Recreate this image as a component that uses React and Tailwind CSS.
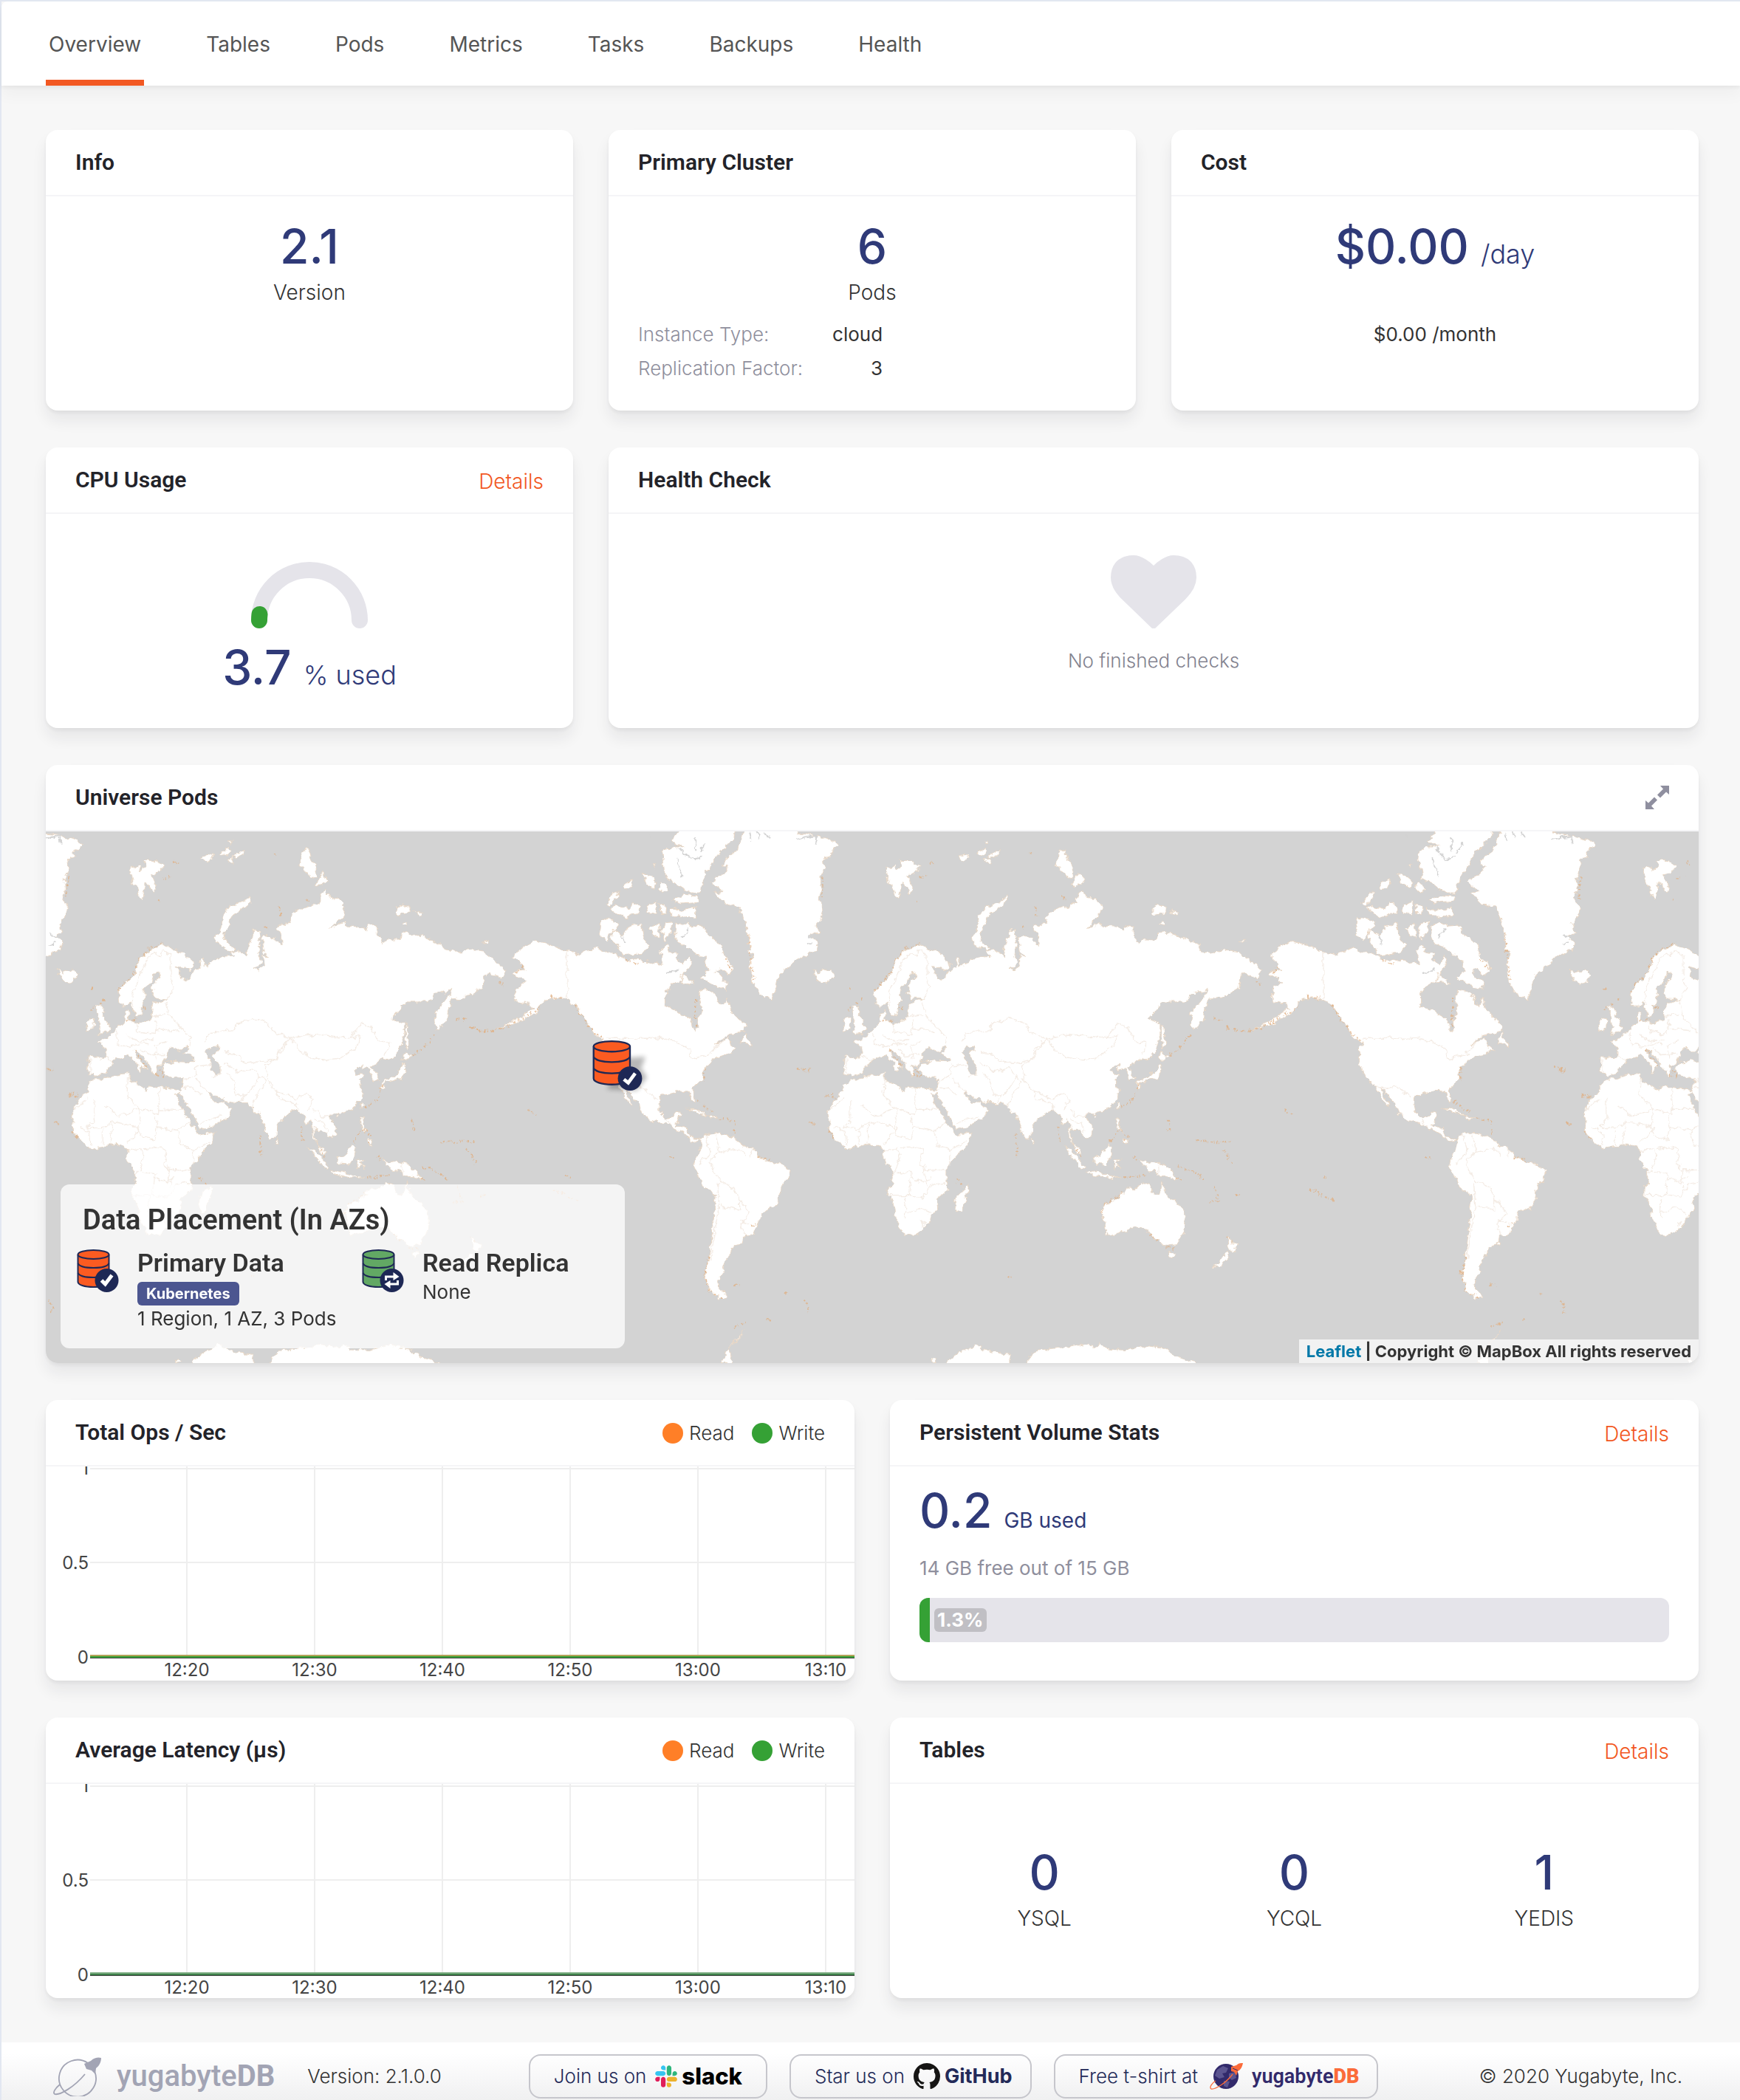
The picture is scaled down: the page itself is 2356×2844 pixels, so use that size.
import React from "react";

const TITLE = "font-['Roboto']";

/* ---------- shared pieces ---------- */

function Card({ title, action, className = "", children }) {
  return (
    <section
      className={`flex min-w-0 flex-col overflow-hidden rounded-2xl bg-white shadow-[0_3px_4px_rgba(35,35,41,0.05),0_14px_20px_rgba(35,35,41,0.07)] ${className}`}
    >
      <header className="flex h-[90px] shrink-0 items-center justify-between border-b-2 border-[#f5f5f7] px-10">
        <h2 className={`${TITLE} text-[30px] leading-10 font-semibold text-[#232329]`}>{title}</h2>
        {action}
      </header>
      {children}
    </section>
  );
}

function Details() {
  return (
    <a href="#details" className="pt-1 text-[28px] leading-10 font-light text-[#f25822]">
      Details
    </a>
  );
}

function Big({ value, unit, small = false }) {
  return (
    <div className="text-[64px] leading-20 font-medium text-[#2f3a78]">
      {value}
      {unit && (
        <span className={small ? "ml-4 text-[28px] leading-none font-normal" : "ml-4 text-[36px] leading-none font-light"}>
          {unit}
        </span>
      )}
    </div>
  );
}

function Legend() {
  return (
    <ul className="flex gap-6 pt-0.5 text-[26px] leading-10 font-light">
      <li className="flex items-center gap-2">
        <span className="size-7 rounded-full bg-[#ff7f27]" />
        Read
      </li>
      <li className="flex items-center gap-2">
        <span className="size-7 rounded-full bg-[#35a135]" />
        Write
      </li>
    </ul>
  );
}

/* ---------- chart ---------- */

const TIMES = ["12:20", "12:30", "12:40", "12:50", "13:00", "13:10"];

function Chart({ line, under }) {
  return (
    <svg viewBox="0 0 1095 290" className="block h-auto w-full" role="img" aria-label="Read and write over time">
      {TIMES.map((t, i) => (
        <line key={t} x1={191 + i * 173} x2={191 + i * 173} y1="0" y2="257" stroke="#eeeeee" strokeWidth="2" />
      ))}
      <path d="M60 3H1095M60 130H1095" stroke="#eeeeee" strokeWidth="2" />
      <path d="M60 259H1095" stroke="#444444" strokeWidth="2" />
      <path d="M60 256H1095" stroke={under} strokeWidth="2" />
      <path d="M60 258H1095" stroke={line} strokeWidth="2" />
      <g fill="#444444" fontFamily="Inter" fontSize="24">
        <text x="58" y="11" textAnchor="end">1</text>
        <text x="58" y="139" textAnchor="end">0.5</text>
        <text x="58" y="267" textAnchor="end">0</text>
        {TIMES.map((t, i) => (
          <text key={t} x={191 + i * 173} y="284" textAnchor="middle">{t}</text>
        ))}
      </g>
    </svg>
  );
}

/* ---------- icons ---------- */

function Database({ color, badge, className }) {
  return (
    <svg viewBox="0 0 57 58" className={className} aria-hidden="true">
      <path d="M1 7V44C1 48 10 51 22 51S43 48 43 44V7" fill={color} stroke="#1e2855" strokeWidth="2" />
      <path d="M1 19C3 23 12 25 22 25S41 23 43 19M1 32C3 36 12 38 22 38S41 36 43 32" fill="none" stroke="#1e2855" strokeWidth="2" />
      <ellipse cx="22" cy="7" rx="21" ry="6" fill={color} stroke="#1e2855" strokeWidth="2" />
      {badge === "pin" && (
        <>
          <circle cx="43" cy="44" r="14" fill="#1e2855" />
          <path d="M36 45L41 49L49 38" fill="none" stroke="#fff" strokeWidth="4" />
        </>
      )}
      {badge === "check" && (
        <>
          <circle cx="40" cy="42" r="16" fill="#1e2855" />
          <path d="M33 42L38 47L47 35" fill="none" stroke="#fff" strokeWidth="5" />
        </>
      )}
      {badge === "sync" && (
        <>
          <circle cx="40" cy="42" r="16" fill="#1e2855" />
          <path d="M32 42V37H44M48 42V47H36" fill="none" stroke="#fff" strokeWidth="3" />
          <path d="M42 31L50 37L42 42ZM38 42L30 47L38 53Z" fill="#fff" />
        </>
      )}
    </svg>
  );
}

function Heart() {
  return (
    <svg viewBox="0 128 1792 1536" className="w-29 fill-[#e5e4ea]" aria-hidden="true">
      <path d="M896 1664q-26 0-44-18l-624-602q-10-8-27.500-26t-55.500-65.500-68-97.500-53.500-121-23.500-138q0-220 127-344t351-124q62 0 126.500 21.500t120 58 95.500 68.500 76 68q36-36 76-68t95.500-68.500 120-58 126.500-21.500q224 0 351 124t127 344q0 221-229 450l-623 600q-18 18-44 18z" />
    </svg>
  );
}

function Gauge() {
  return (
    <svg viewBox="0 0 158 92" className="w-[158px]" aria-hidden="true">
      <g fill="none" strokeWidth="22" strokeLinecap="round">
        <path d="M11 80A68 68 0 0 1 147 80" stroke="#e5e4ea" />
        <path d="M11 80A68 68 0 0 1 11.500 72" stroke="#35a135" />
      </g>
    </svg>
  );
}

function Slack() {
  return (
    <svg viewBox="0 0 127 127" className="size-[30px]" aria-hidden="true">
      <path fill="#e01e5a" d="M27.200 80c0 7.300-5.900 13.200-13.200 13.200S.8 87.300.8 80s5.900-13.200 13.200-13.200h13.200zm6.600 0c0-7.300 5.900-13.200 13.200-13.200s13.200 5.900 13.200 13.200v33c0 7.300-5.900 13.200-13.200 13.200s-13.200-5.900-13.200-13.200z" />
      <path fill="#36c5f0" d="M47 27c-7.300 0-13.200-5.900-13.200-13.200S39.700.6 47 .6s13.200 5.900 13.200 13.200V27zm0 6.700c7.300 0 13.200 5.900 13.200 13.200S54.300 60.100 47 60.100H13.900C6.600 60.100.7 54.200.7 46.900s5.900-13.200 13.200-13.200z" />
      <path fill="#2eb67d" d="M99.900 46.900c0-7.300 5.900-13.200 13.200-13.200s13.200 5.900 13.200 13.200-5.900 13.200-13.200 13.200H99.900zm-6.600 0c0 7.300-5.900 13.200-13.200 13.200s-13.200-5.900-13.200-13.200V13.800C66.900 6.500 72.800.6 80.100.6s13.200 5.900 13.200 13.200z" />
      <path fill="#ecb22e" d="M80.100 99.800c7.300 0 13.200 5.900 13.200 13.200s-5.900 13.200-13.200 13.200-13.200-5.900-13.200-13.200V99.800zm0-6.600c-7.300 0-13.200-5.900-13.200-13.200s5.900-13.200 13.200-13.200h33.100c7.300 0 13.200 5.900 13.200 13.200s-5.900 13.200-13.200 13.200z" />
    </svg>
  );
}

function GitHub() {
  return (
    <svg viewBox="0 0 16 16" className="size-9 fill-[#161514]" aria-hidden="true">
      <path d="M8 0C3.580 0 0 3.580 0 8c0 3.540 2.290 6.530 5.470 7.590.4.070.550-.170.550-.380 0-.190-.010-.820-.010-1.490-2.010.370-2.530-.490-2.690-.940-.090-.230-.480-.940-.820-1.130-.280-.150-.680-.520-.010-.530.630-.010 1.080.580 1.230.820.720 1.210 1.870.870 2.330.660.070-.520.280-.870.510-1.070-1.780-.2-3.640-.890-3.640-3.950 0-.870.310-1.590.820-2.150-.080-.2-.360-1.020.080-2.120 0 0 .670-.210 2.200.820.640-.180 1.320-.270 2-.270s1.360.090 2 .270c1.530-1.040 2.200-.820 2.200-.820.440 1.100.160 1.920.080 2.120.510.560.820 1.270.820 2.150 0 3.070-1.870 3.750-3.650 3.950.290.250.540.730.540 1.480 0 1.070-.010 1.930-.010 2.200 0 .210.150.460.550.380A8.010 8.010 0 0 0 16 8c0-4.420-3.580-8-8-8z" />
    </svg>
  );
}

function OutlinePlanet() {
  return (
    <svg viewBox="0 0 66 54" className="w-[66px]" fill="none" stroke="#a2a4b4" aria-hidden="true">
      <path d="M47 9A25 25 0 1 0 56 20" strokeWidth="1.800" />
      <path d="M43 24C29 41 9 53 2 51C-1 49 3 43 9 38" strokeWidth="1.800" />
      <path d="M42 10L51 6C56 1 62 1 65 2C65 8 62 13 58 16L57 24L52 19L45 17Z" fill="#a2a4b4" stroke="none" />
    </svg>
  );
}

function ColorPlanet() {
  return (
    <svg viewBox="0 0 45 36" className="w-[45px]" aria-hidden="true">
      <circle cx="22" cy="18" r="17" fill="#322a6b" />
      <path d="M10 9L18 4L25 7L22 13L17 14L20 19L13 21L7 17ZM26 14L34 12L36 20L30 23L26 20ZM19 24L27 25L24 33L19 31Z" fill="#5b5590" />
      <path d="M31 15C23 26 8 36 2 35C-1 33 3 27 8 24" fill="none" stroke="#fb6b3a" strokeWidth="1.300" />
      <path d="M29 5L36 3C39 0 42 0 45 0C44 5 42 9 38 11L36 17L33 12L29 11Z" fill="#fb6b3a" />
      <path d="M31 7L38 10" stroke="#322a6b" />
    </svg>
  );
}

/* ---------- world map ---------- */

const EAST_LAND =
  "M430 368L460 380 500 395 530 415 537 430 525 442 495 435 472 430 485 445 490 465 510 470 530 450 545 440 562 435 558 410 568 405 572 430 600 420 630 405 680 403 665 390 690 385 715 395 728 405 728 380 740 350 750 328 768 330 772 360 765 400 775 415 765 432 742 438 768 441 785 425 780 400 805 405 785 395 778 350 800 345 830 355 850 375 848 345 828 325 835 315 875 310 880 285 920 268 960 262 985 250 985 230 1005 218 1020 240 1050 243 1075 262 1065 290 1018 327 1065 308 1085 318 1120 320 1150 330 1155 315 1185 318 1188 345 1207 365 1220 355 1270 355 1275 335 1310 340 1365 350 1385 362 1415 368 1425 388 1490 392 1500 383 1560 390 1607 420 1643 440 1625 465 1584 450 1566 455 1560 490 1500 518 1450 522 1440 550 1435 580 1410 600 1398 612 1388 580 1390 560 1410 540 1440 510 1450 492 1425 510 1420 498 1395 505 1370 530 1290 530 1265 553 1238 578 1280 590 1280 625 1265 665 1240 690 1200 690 1180 708 1160 712 1175 722 1192 745 1170 752 1165 735 1155 715 1130 722 1138 703 1105 718 1115 730 1140 733 1120 750 1135 775 1130 800 1105 825 1060 838 1045 845 1030 838 1020 850 1042 880 1038 900 1020 912 1005 895 985 885 975 890 965 880 965 905 975 930 995 940 1005 955 985 952 972 925 960 910 958 880 950 860 935 870 925 845 905 832 880 835 870 845 828 872 826 900 808 917 790 890 775 850 770 838 750 840 745 825 725 812 690 812 650 808 640 798 610 795 590 778 595 795 620 815 645 808 650 818 672 830 660 850 640 862 600 880 558 890 545 865 525 835 497 800 490 785 472 787 492 825 520 860 545 890 555 902 612 893 600 925 560 960 525 990 525 1025 532 1055 490 1080 493 1110 470 1130 450 1160 420 1178 375 1183 362 1165 345 1130 335 1090 318 1070 320 1045 333 1035 325 995 300 970 302 940 270 930 240 928 215 935 170 940 130 915 108 890 110 865 103 835 130 800 160 780 160 765 187 745 215 745 250 735 305 732 310 752 345 762 370 778 380 765 415 768 470 775 490 778 497 745 470 740 440 735 425 715 440 703 470 700 455 695 440 693 435 685 430 705 405 708 410 735 400 738 385 715 365 690 345 672 322 665 335 685 360 705 370 718 355 712 352 728 342 722 340 705 320 690 305 678 285 685 255 690 250 705 230 718 228 730 190 738 183 732 162 730 165 682 222 688 225 670 218 655 200 640 220 635 245 620 265 605 285 590 292 585 290 560 305 553 308 580 335 590 385 580 388 560 390 548 395 535 445 522 400 520 388 505 390 485 415 460 413 448 395 450 385 475 362 490 360 510 365 525 352 535 350 565 330 572 318 545 315 530 290 545 275 535 268 500 300 475 325 455 345 410 380 385Z" +
  "M190 545L205 540 215 555 212 570 225 580 240 605 232 617 195 620 205 600 200 575Z" +
  "M158 590L165 575 185 578 182 602 160 612Z" +
  "M55 440L70 448 110 438 128 455 110 475 90 480 65 468Z" +
  "M310 155L340 150 350 165 365 150 360 135 400 135 432 150 410 170 385 175 405 215 395 225 370 195 352 243 340 225 335 205 320 200Z" +
  "M565 125L600 115 605 128 585 138ZM632 112L650 105 660 95 665 110 650 122ZM670 125L700 110 715 106 705 120 690 128ZM655 130L675 128 680 140 660 140ZM660 80L675 80 670 90Z" +
  "M740 235L738 250 700 275 670 290 660 320 642 340 650 365 682 380 670 388 625 370 613 350 632 325 640 290 665 262 700 255Z" +
  "M912 150L922 108 945 103 955 135 970 155 970 185 940 175 925 155ZM970 207L990 168 1012 190 995 200Z" +
  "M1250 265L1265 258 1305 265 1303 280 1260 288ZM1316 276L1348 280 1340 290ZM1275 315L1290 308 1295 320ZM1558 362L1584 357 1575 366Z" +
  "M1285 592L1293 600 1298 650 1288 660 1284 630Z" +
  "M1282 668L1308 682 1290 692 1276 690ZM1283 700L1285 725 1270 745 1235 750 1205 758 1210 768 1202 774 1196 755 1240 740 1265 720 1275 705Z" +
  "M1128 812L1135 818 1128 832 1123 822ZM1125 855L1137 858 1135 880 1150 895 1130 885ZM1150 912L1168 915 1165 930 1148 922ZM1040 848L1052 848 1044 858ZM826 908L837 925 828 930Z" +
  "M940 933L965 945 1000 975 1018 995 1000 995 970 965ZM1018 1001L1060 1005 1100 1015 1140 1020 1090 1021 1030 1011Z" +
  "M1040 965L1070 960 1095 930 1110 935 1105 965 1088 985 1050 982Z" +
  "M1116 972L1145 970 1125 978 1142 998 1126 986 1120 998Z" +
  "M1205 968L1225 978 1250 975 1300 985 1325 1005 1345 1027 1310 1018 1280 1018 1265 1000 1240 1000 1220 985Z" +
  "M598 1042L603 1055 580 1115 560 1118 553 1095 560 1070Z" +
  "M1290 1032L1300 1065 1345 1095 1370 1125 1368 1165 1350 1190 1340 1208 1295 1212 1270 1195 1255 1190 1240 1170 1200 1160 1160 1168 1120 1180 1090 1185 1085 1150 1070 1115 1085 1095 1120 1085 1145 1065 1165 1050 1195 1052 1215 1035 1245 1040 1248 1062 1278 1068Z" +
  "M1308 1228L1335 1230 1320 1250ZM1518 1185L1540 1205 1558 1208 1535 1232 1525 1215ZM1518 1228L1527 1238 1490 1274 1470 1270 1500 1245Z" +
  "M525 1535L570 1510 605 1500 625 1485 650 1500 680 1508 747 1515 748 1570 525 1570ZM470 1530L485 1528 490 1538 475 1538Z" +
  "M800 1570L805 1535 830 1510 880 1500 945 1495 990 1487 1050 1495 1070 1485 1090 1500 1160 1503 1230 1490 1300 1500 1330 1518 1410 1540 1400 1570Z";

const EAST_WATER =
  "M437 698L445 665 465 657 485 668 500 668 515 652 522 660 503 675 535 686 540 697 480 695 455 694Z" +
  "M578 672L595 658 625 653 622 666 605 675 615 695 630 705 630 733 612 732 598 718 597 695Z";

const EAST_BORDERS =
  "M415 768V845M415 830H495M185 800V860L160 880M225 820L270 850 345 828 350 850 340 880M305 732L300 790 345 828 415 845M103 835L160 800M160 880L215 885 250 865 290 870 340 880 350 905 400 915 405 880M400 850L405 880 480 890 525 865M480 890L490 930 540 945 590 920M535 945V990M360 940L420 935 440 945 430 985 450 1000 520 1000M302 945L350 940 360 960 345 1000 330 1010M320 1070H390L400 1010 350 1005M390 1070L445 1075 475 1040 520 1035M378 1075V1135M378 1120L430 1105 470 1120M445 985L455 1050M130 880L165 890 170 930M215 890V930M250 870L240 925M300 925L330 905 350 880M400 1020L440 1035 470 1020" +
  "M578 640L600 615 680 610 690 590 750 575 800 590 820 615 880 632 850 660 825 690 760 700 720 700 690 680 645 670M880 632L960 620 1000 625 1060 630 1090 630 1125 625 1120 650 1060 685 1010 693 950 685 910 665 880 632M1090 630L1130 590 1165 600 1190 640 1230 645 1215 680M880 632L840 660 830 690 790 705 800 750 830 780 900 800 935 785 960 800 940 835M645 700L690 725 750 715 770 740 750 770 720 790 685 790 680 750 650 725M635 730L600 740M545 740L570 770 590 778M497 770L530 770 560 790M500 750L540 735 540 710 600 705M720 790L700 812M770 740L790 750 760 790 740 825M830 780L840 800 900 815 905 832M960 830L985 850 1010 850 1035 838M965 860L1000 870 1010 895M560 870L600 855 640 850" +
  "M325 540L320 500 345 460 375 405 400 395 415 400 430 385 455 400 455 450 465 490 445 520M440 530L450 565 480 595 525 630 520 650M390 570L440 565M335 590L340 615 400 620 405 580M400 605L480 610M300 620L330 640 390 635M265 610L270 650 310 655 350 645 380 650M225 680L250 692M170 690V730M350 660L380 680 430 675M405 690L400 650 440 640M1275 985V1015M435 1145L448 1148 440 1158Z";

const EAST_SPECKS =
  "M268 500L300 470 325 450 345 410 380 380 430 365M175 555L190 540M220 518V525M205 532L210 535M178 492L180 502M300 585L335 580M355 545L375 550M405 735L435 740 410 710M325 665L370 715M1310 680L1350 660 1390 620M1203 760L1190 800 1140 825M1135 885L1165 905 1150 930M1105 920L1130 890M1150 1022L1210 1015 1240 1010M1190 960L1200 980M1345 990L1400 1005 1435 1025M1340 1022L1360 1030M1470 1045L1490 1085 1450 1090M918 880L925 920M985 940L1005 965M770 900L775 965M95 795H130M40 865L60 875M15 720L40 718M740 1298L755 1300M1072 1120L1085 1095 1145 1065M1245 1180L1270 1200M1300 1218H1330M1515 1185L1535 1200M555 1025L580 1040M840 262L845 290M790 320L800 325M935 240L950 250M430 185L455 180M415 248L420 245M465 140L480 142M820 114H828M1310 860L1315 885 1305 888M1410 920L1530 920M1500 940L1535 980M1548 1072L1568 1070M105 890L125 912M20 1365L35 1385 30 1402M1465 575L1500 582M1518 600L1568 612";

const WEST_LAND =
  "M215 360L260 370 310 388 350 398 400 378 425 390 445 390 480 405 490 415 520 410 540 416 560 415 600 428 598 400 590 390 612 370 622 390 645 395 640 410 660 425 680 400 685 420 668 445 655 470 630 478 608 505 607 540 650 560 685 578 690 600 700 612 706 600 705 575 718 560 710 530 715 493 740 500 765 515 770 535 785 540 795 518 800 545 825 575 850 592 845 612 790 625 760 650 800 628 805 652 825 662 795 678 760 685 745 700 722 715 722 745 690 770 698 805 692 812 680 780 650 778 590 792 588 835 610 855 635 850 640 838 655 840 645 865 640 878 670 880 680 905 715 915 690 920 660 895 630 882 605 870 560 858 538 840 530 815 485 768 510 822 500 815 465 760 440 745 422 705 420 660 432 650 400 625 375 590 340 540 310 520 265 518 240 530 220 560 160 590 100 607 170 575 210 548 200 535 165 530 155 515 165 490 188 475 180 462 150 455 155 445 185 440 175 420 152 405 175 380Z" +
  "M850 614L856 632 870 652 835 645Z" +
  "M715 915L725 900 760 895 815 908 830 925 870 940 890 965 950 982 983 1000 975 1025 955 1045 950 1080 940 1100 895 1120 895 1140 870 1180 845 1183 842 1205 810 1215 800 1240 780 1270 785 1285 765 1310 768 1330 795 1352 770 1360 740 1335 728 1290 740 1240 750 1170 760 1070 725 1050 700 1005 692 990 700 960 715 940Z" +
  "M745 195L795 165 795 150 780 148 795 125 825 105 850 40 1000 40 1010 58 1050 64 1085 72 1110 78 1130 92 1105 110 1110 122 1085 130 1088 160 1075 180 1078 220 1068 240 1085 265 1080 290 1060 312 1070 335 1045 345 1068 362 1062 385 1000 412 985 430 950 455 940 490 928 522 895 510 870 475 862 420 875 395 860 385 858 350 850 310 830 262 790 258 755 225 780 222Z" +
  "M820 40L815 70 790 95 765 120 740 160 725 180 712 225 680 225 640 200 610 185 605 150 597 130 600 110 625 95 660 95 625 82 660 40Z" +
  "M630 245L665 232 710 235 705 250 640 255ZM622 268L655 275 700 266 698 293 630 290Z" +
  "M450 325L480 345 500 320 535 310 545 355 560 375 540 395 480 400 460 370 445 350ZM415 295L450 300 468 312 440 345 430 360 412 345Z" +
  "M440 270L455 262 500 270 515 250 535 265 530 282 490 295ZM430 255L450 225 470 225 465 240 440 262Z" +
  "M640 315L660 310 690 318 720 316 740 345 775 370 785 400 815 435 800 455 770 435 760 445 795 480 790 498 750 480 715 462 740 440 725 410 670 375 645 365 636 345Z" +
  "M560 325L590 310 592 350 575 345ZM605 308L630 305 628 330 605 360 598 330ZM550 262L585 248 580 285 555 280ZM592 255L612 262 610 288 595 285ZM480 210L490 192 512 190 505 215 485 218ZM538 170L560 180 580 195 575 212 550 200ZM588 210L600 195 622 215 600 222ZM572 145L580 148 575 155Z" +
  "M655 450L680 465 695 480 655 475ZM670 828L700 828 738 848 715 843 690 833ZM740 850L768 852 745 858Z" +
  "M850 1448L825 1468 800 1500 812 1540 775 1540 800 1495Z";

const WEST_BORDERS =
  "M313 390V518M430 632H600L640 640 680 660 690 690 740 675 780 640M470 765L500 770 540 768 580 800M730 900L745 950 710 985M760 895L770 950 830 940 850 960M770 950L740 975 770 1030 815 1050 830 1080 830 1110 775 1100M765 1035L770 1100 755 1180 745 1250M830 1080L865 1120 835 1150 845 1180M835 1140L865 1150M610 860L625 880M870 940L865 965";

const WEST_INLETS =
  "M650 100L680 130 715 125M700 70V110M640 130L660 180M730 85L715 110M860 55L865 80M880 45L890 75M905 55L920 72M1000 76L1035 70 1060 66 1063 90M1030 370L1050 365M1035 345L1055 350M660 350L680 325M610 450L650 440M480 345L490 370M560 60V80M1085 190L1075 200";

const WEST_SPECKS =
  "M20 600L60 612 120 605 170 580 235 545M265 515L310 520M340 540L375 595 430 645M700 520V600M490 415L530 425M860 340L865 410 875 470M1085 180L1080 240M725 715V750M705 805L735 830 760 838M770 855L815 860 820 905M885 965L930 970M740 1240L728 1290 740 1335 780 1360M815 1322H835M965 1345L975 1348M620 966H635M1005 712L1045 725M1090 790H1115M1045 865L1060 875M195 832L225 848M310 1015L330 1025M1160 492V502M275 1055L345 1085M50 1072L70 1068M870 1160L880 1150M1035 1370L1040 1390M815 1440L850 1425M915 1416H925M110 478L130 482M785 410L810 440M160 450L180 430";

function Half({ land, water, borders, inlets, specks }) {
  return (
    <>
      <path d={land} fill="#fff" stroke="#e8d5c2" strokeWidth="2" strokeLinejoin="round" />
      {water && <path d={water} fill="#d3d3d3" stroke="#e8d5c2" strokeWidth="2" />}
      <path d={borders} fill="none" stroke="#f4ece5" strokeWidth="3" />
      {inlets && <path d={inlets} fill="none" stroke="#d3d3d3" strokeWidth="4" />}
      <path d={specks} fill="none" stroke="#e0b084" strokeWidth="5" strokeDasharray="6 5 3 9" opacity="0.800" />
    </>
  );
}

function WorldMap() {
  return (
    <svg viewBox="0 0 2238 720" preserveAspectRatio="xMinYMin slice" className="absolute inset-0 size-full" aria-hidden="true">
      <defs>
        <filter id="coast" x="0" y="0" width="2238" height="720" filterUnits="userSpaceOnUse">
          <feTurbulence type="fractalNoise" baseFrequency="0.120" numOctaves="3" seed="4" />
          <feDisplacementMap in="SourceGraphic" scale="9" xChannelSelector="R" yChannelSelector="G" />
        </filter>
        <g id="east" transform="translate(1019 -26) scale(0.38265 0.48469)">
          <Half land={EAST_LAND} water={EAST_WATER} borders={EAST_BORDERS} specks={EAST_SPECKS} />
        </g>
        <g id="west" transform="translate(1589 -26) scale(0.45026 0.48469)">
          <Half land={WEST_LAND} borders={WEST_BORDERS} inlets={WEST_INLETS} specks={WEST_SPECKS} />
        </g>
      </defs>
      <rect width="2238" height="720" fill="#d3d3d3" />
      <g filter="url(#coast)">
        <use href="#east" x="-1024" />
        <use href="#east" />
        <use href="#east" x="1024" />
        <use href="#west" x="-2048" />
        <use href="#west" x="-1024" />
        <use href="#west" />
      </g>
    </svg>
  );
}

function DataPlacement() {
  return (
    <div className="absolute bottom-5 left-5 h-[222px] w-[764px] rounded-xl bg-white/75 px-[22px] pt-6 whitespace-nowrap text-[#333333]">
      <h3 className={`${TITLE} pl-2 text-[38px] leading-12 font-semibold`}>Data Placement (In AZs)</h3>
      <div className="mt-2 grid grid-cols-[386px_auto]">
        <div className="flex">
          <Database color="#fb5b21" badge="check" className="mt-2 size-[58px] shrink-0" />
          <div className="ml-6">
            <h4 className={`${TITLE} text-[34px] leading-[52px] font-semibold`}>Primary Data</h4>
            <span className="flex h-8 w-fit items-center rounded-md bg-[#4c5690] px-3 text-xl font-bold text-white">
              Kubernetes
            </span>
            <p className="text-[26px] leading-9">1 Region, 1 AZ, 3 Pods</p>
          </div>
        </div>
        <div className="flex">
          <Database color="#62a864" badge="sync" className="mt-2 size-[58px] shrink-0" />
          <div className="ml-6">
            <h4 className={`${TITLE} text-[34px] leading-[52px] font-semibold`}>Read Replica</h4>
            <p className="text-[26px] leading-7">None</p>
          </div>
        </div>
      </div>
    </div>
  );
}

/* ---------- page ---------- */

const TABS = ["Overview", "Tables", "Pods", "Metrics", "Tasks", "Backups", "Health"];

function FooterLink({ wide = false, children }) {
  return (
    <a
      href="#community"
      className={`flex h-[60px] items-center rounded-2xl border-2 border-[#c6c6cc] pl-8 text-[26px] font-light text-[#232a58] ${wide ? "pr-8" : "pr-6"}`}
    >
      {children}
    </a>
  );
}

export default function App() {
  return (
    <div className="border-t-2 border-l-2 border-[#e2e7f1] bg-[#f7f7f7] font-['Inter',sans-serif] text-[#333333]">
      <nav className="flex h-[114px] gap-20 rounded-tl-lg bg-white px-15 shadow-[0_3px_4px_rgba(35,35,41,0.05),0_14px_20px_rgba(35,35,41,0.03)]">
        {TABS.map((t, i) => (
          <a
            key={t}
            href="#tab"
            aria-current={i === 0 ? "page" : undefined}
            className={`flex items-center border-b-8 px-1 pt-2.5 text-[28px] text-[#555555] ${i === 0 ? "border-[#f25822]" : "border-transparent"}`}
          >
            {t}
          </a>
        ))}
      </nav>

      <main className="flex flex-col gap-[50px] py-15 pr-14 pl-15">
        <div className="grid grid-cols-3 gap-x-12 gap-y-[50px]">
          <Card title="Info" className="min-h-[380px]">
            <div className="pt-7 text-center">
              <Big value="2.1" />
              <p className="text-[28px] leading-11 font-light">Version</p>
            </div>
          </Card>

          <Card title="Primary Cluster" className="min-h-[380px]">
            <div className="px-10 pt-7">
              <div className="text-center">
                <Big value="6" />
                <p className="text-[28px] leading-11 font-light">Pods</p>
              </div>
              <dl className="mt-3 grid w-fit grid-cols-[auto_auto] gap-x-10 text-[26px] leading-[46px]">
                <dt className="font-light text-[#8f8f9d]">Instance Type:</dt>
                <dd className="text-right">cloud</dd>
                <dt className="font-light text-[#8f8f9d]">Replication Factor:</dt>
                <dd className="text-right">3</dd>
              </dl>
            </div>
          </Card>

          <Card title="Cost" className="min-h-[380px]">
            <div className="pt-7 text-center">
              <Big value="$0.00" unit="/day" />
              <p className="mt-14 text-[26px] leading-[46px]">$0.00 /month</p>
            </div>
          </Card>

          <Card title="CPU Usage" action={<Details />} className="min-h-[380px]">
            <div className="flex flex-col items-center gap-3 pt-16">
              <Gauge />
              <Big value="3.7" unit="% used" />
            </div>
          </Card>

          <Card title="Health Check" className="col-span-2 min-h-[380px]">
            <div className="flex flex-col items-center gap-6 pt-14">
              <Heart />
              <p className="text-[26px] leading-10 font-light text-[#83838f]">No finished checks</p>
            </div>
          </Card>
        </div>

        <Card
          title="Universe Pods"
          action={
            <button type="button" aria-label="Expand map">
              <svg viewBox="0 0 32 32" className="size-8 fill-[#8f8f9f]" aria-hidden="true">
                <path d="M20 0H32V12L28 8.500L20 16.500L16 12.500L24 4.500ZM12 32H0V20L4 23.500L12 15.500L16 19.500L8 27.500Z" />
              </svg>
            </button>
          }
        >
          <div className="relative h-[720px] overflow-hidden">
            <WorldMap />
            <svg viewBox="0 0 90 76" className="absolute top-[283px] left-[740px] w-[90px]" aria-hidden="true">
              <path d="M40 24L72 22L66 38L74 50L60 68L20 66Z" fill="#000" opacity="0.280" className="blur-[3px]" />
            </svg>
            <Database color="#fb5b21" badge="pin" className="absolute top-[283px] left-[740px] size-[68px]" />
            <DataPlacement />
            <p className="absolute right-0 bottom-0 bg-white/70 px-2.5 text-[22px] leading-8 font-bold text-[#333333]">
              <a href="#leaflet" className="text-[#0078a8]">Leaflet</a> | Copyright © MapBox All rights reserved
            </p>
          </div>
        </Card>

        <div className="grid grid-cols-2 gap-x-12 gap-y-[50px]">
          <Card title="Total Ops / Sec" action={<Legend />} className="min-h-[380px]">
            <Chart line="#35a135" under="#b5a35a" />
          </Card>

          <Card title="Persistent Volume Stats" action={<Details />} className="min-h-[380px]">
            <div className="px-10 pt-5">
              <Big value="0.2" unit="GB used" small />
              <p className="mt-4 text-[26px] leading-11 text-[#8f8f9d]">14 GB free out of 15 GB</p>
              <div className="mt-[18px] flex h-15 items-center overflow-hidden rounded-xl bg-[#e5e4ea]">
                <span className="h-full w-3.5 bg-[#35a135]" />
                <span className="ml-1.5 rounded-md bg-black/16 px-1 text-[26px] leading-8 font-bold text-white">1.3%</span>
              </div>
            </div>
          </Card>

          <Card title="Average Latency (µs)" action={<Legend />} className="min-h-[380px]">
            <Chart line="#3c8048" under="#7fae84" />
          </Card>

          <Card title="Tables" action={<Details />} className="min-h-[380px]">
            <div className="grid grid-cols-3 px-10 pt-20 text-center">
              {[["0", "YSQL"], ["0", "YCQL"], ["1", "YEDIS"]].map(([n, label]) => (
                <div key={label}>
                  <Big value={n} />
                  <p className="text-[28px] leading-11 font-light">{label}</p>
                </div>
              ))}
            </div>
          </Card>
        </div>
      </main>

      <footer className="flex items-center bg-linear-to-b from-white from-20% to-[#f0f0f1] pt-4 pr-[78px] pb-0.5 pl-[70px] text-[26px] leading-10 whitespace-nowrap">
        <OutlinePlanet />
        <span className={`${TITLE} ml-5 text-[40px] font-medium text-[#a2a4b4]`}>
          yugabyte<b>DB</b>
        </span>
        <span className="ml-11 font-light">Version: 2.1.0.0</span>
        <div className="ml-[118px] flex gap-[30px]">
          <FooterLink wide>
            Join us on
            <span className="ml-3 flex items-center gap-1.5 text-[31px] font-extrabold text-black">
              <Slack />
              slack
            </span>
          </FooterLink>
          <FooterLink>
            Star us on
            <span className="ml-3 flex items-center gap-1.5 text-[27px] font-bold">
              <GitHub />
              GitHub
            </span>
          </FooterLink>
          <FooterLink>
            Free t-shirt at
            <span className={`${TITLE} ml-4 flex items-center gap-3 text-[27px] font-semibold text-[#322a6b]`}>
              <ColorPlanet />
              <span>
                yugabyte<b className="text-[#fb6b3a]">DB</b>
              </span>
            </span>
          </FooterLink>
        </div>
        <span className="ml-auto font-light">© 2020 Yugabyte, Inc.</span>
      </footer>
    </div>
  );
}
